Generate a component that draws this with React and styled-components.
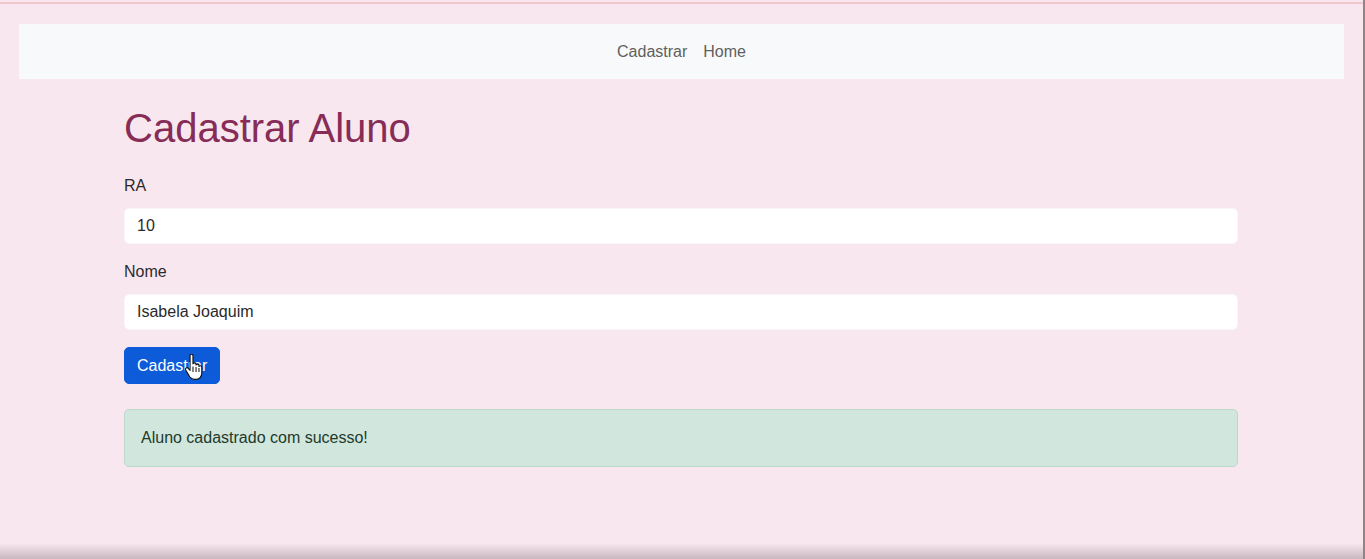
import styled, { createGlobalStyle } from "styled-components";

const GlobalStyle = createGlobalStyle`
  html, body {
    margin: 0;
    padding: 0;
    background: #f8e7ee;
    font-family: "Liberation Sans", Arial, sans-serif;
  }
  * {
    box-sizing: border-box;
  }
`;

const Frame = styled.div`
  position: relative;
  display: flex;
  flex-direction: column;
  width: 1365px;
  height: 559px;
  overflow: hidden;
  background: #f8e7ee;
  border-right: 2px solid #8e8589;
`;

const TopRule = styled.div`
  height: 2px;
  margin-top: 2px;
  background: #efc7cd;
`;

const Navbar = styled.nav`
  display: flex;
  justify-content: center;
  align-items: center;
  gap: 16px;
  height: 55px;
  margin: 20px 19px 0 19px;
  background: #f8f9fa;
`;

const NavLink = styled.a`
  color: #5f5f5f;
  font-size: 16px;
  text-decoration: none;
`;

const Container = styled.main`
  display: flex;
  flex-direction: column;
  width: 1114px;
  margin-left: 124px;
`;

const Title = styled.h1`
  margin: 25px 0 22px 0;
  font-size: 40px;
  font-weight: 400;
  line-height: 1.2;
  color: #862c57;
`;

const Field = styled.div`
  display: flex;
  flex-direction: column;
  margin-bottom: ${props => props.gap || 16}px;
`;

const Label = styled.label`
  font-size: 16px;
  line-height: 24px;
  color: #2e2a2c;
  margin-bottom: 10px;
`;

const Input = styled.input`
  height: 36px;
  padding: 6px 12px;
  font-family: inherit;
  font-size: 16px;
  color: #2a2a2a;
  background: #fff;
  border: 1px solid #fbf5f7;
  border-radius: 5px;
  outline: none;
`;

const ButtonRow = styled.div`
  position: relative;
  width: fit-content;
`;

const Button = styled.button`
  height: 37px;
  padding: 0 12px;
  font-family: inherit;
  font-size: 16px;
  color: #fff;
  background: #0d5bd8;
  border: 1px solid #0d5bd8;
  border-radius: 5px;
  cursor: pointer;
`;

const Cursor = styled.svg`
  position: absolute;
  left: 60px;
  top: 7px;
  pointer-events: none;
`;

const Alert = styled.div`
  margin-top: 25px;
  padding: 16px;
  font-size: 16px;
  line-height: 24px;
  color: #1d3a2b;
  background: #d1e6dc;
  border: 1px solid #bdd8cc;
  border-radius: 5px;
`;

const Shade = styled.div`
  margin-top: auto;
  height: 16px;
  background: linear-gradient(to bottom, rgba(210, 195, 203, 0), rgba(190, 172, 181, 0.8));
`;

function HandCursor() {
  return (
    <Cursor width="20" height="26" viewBox="0 0 17 23">
      <path
        d="M5 1.5c0-0.8 0.6-1.3 1.3-1.3S7.6 0.7 7.6 1.5v7.2c0.3-0.6 0.8-0.9 1.4-0.9 0.8 0 1.3 0.6 1.3 1.3v0.6c0.3-0.5 0.8-0.8 1.3-0.8 0.8 0 1.3 0.6 1.3 1.3v0.8c0.3-0.4 0.7-0.6 1.2-0.6 0.8 0 1.3 0.6 1.3 1.3v5.2c0 3.2-2.2 5.6-5.3 5.6H9c-2 0-3.2-0.9-4.3-2.4L1.2 14.3c-0.5-0.7-0.3-1.6 0.4-2 0.6-0.4 1.4-0.2 1.9 0.4L5 14.5z"
        fill="#fff"
        stroke="#111"
        strokeWidth="1"
        strokeLinejoin="round"
      />
      <path d="M7.6 11v5M10.3 11.5v4.5M12.9 12.4v3.6" stroke="#111" strokeWidth="0.9" />
    </Cursor>
  );
}

export default function App() {
  return (
    <Frame>
      <GlobalStyle />
      <TopRule />
      <Navbar>
        <NavLink href="#">Cadastrar</NavLink>
        <NavLink href="#">Home</NavLink>
      </Navbar>
      <Container>
        <Title>Cadastrar Aluno</Title>
        <Field>
          <Label htmlFor="ra">RA</Label>
          <Input id="ra" defaultValue="10" />
        </Field>
        <Field gap={17}>
          <Label htmlFor="nome">Nome</Label>
          <Input id="nome" defaultValue="Isabela Joaquim" />
        </Field>
        <ButtonRow>
          <Button type="button">Cadastrar</Button>
          <HandCursor />
        </ButtonRow>
        <Alert>Aluno cadastrado com sucesso!</Alert>
      </Container>
      <Shade />
    </Frame>
  );
}
